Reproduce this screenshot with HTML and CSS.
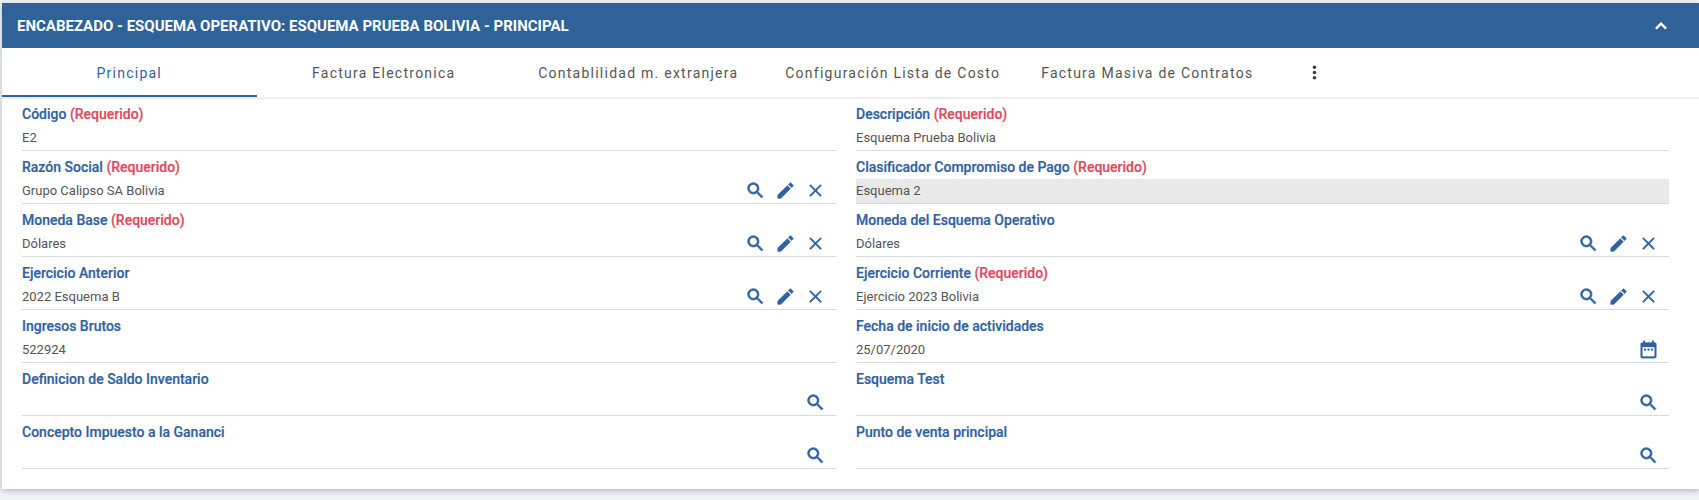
FILE: index.html
```html
<!DOCTYPE html>
<html lang="es">
<head>
<meta charset="utf-8">
<title>Esquema Operativo</title>
<link rel="stylesheet" href="styles.css">
</head>
<body>
<svg class="defs" width="0" height="0" aria-hidden="true">
  <symbol id="i-search" viewBox="0 0 24 24"><path d="M15.5 14h-.79l-.28-.27A6.47 6.47 0 0 0 16 9.5 6.5 6.5 0 1 0 9.5 16c1.61 0 3.09-.59 4.23-1.57l.27.28v.79l5 4.99L20.49 19l-4.99-5zm-6 0C7.01 14 5 11.99 5 9.5S7.01 5 9.5 5 14 7.01 14 9.5 11.99 14 9.5 14z"/></symbol>
  <symbol id="i-edit" viewBox="0 0 24 24"><path d="M3 17.25V21h3.75L17.81 9.94l-3.75-3.75L3 17.25zM20.71 7.04a1 1 0 0 0 0-1.41l-2.34-2.34a1 1 0 0 0-1.41 0l-1.83 1.83 3.75 3.75 1.83-1.83z"/></symbol>
  <symbol id="i-close" viewBox="0 0 24 24"><path d="M19 6.41 17.59 5 12 10.59 6.41 5 5 6.41 10.59 12 5 17.59 6.41 19 12 13.41 17.59 19 19 17.59 13.41 12z"/></symbol>
  <symbol id="i-cal" viewBox="0 0 24 24"><path d="M7 11h2v2H7zm4 0h2v2h-2zm4 0h2v2h-2zM19 4h-1V2h-2v2H8V2H6v2H5c-1.11 0-1.99.9-1.99 2L3 20c0 1.1.89 2 2 2h14c1.1 0 2-.9 2-2V6c0-1.1-.9-2-2-2zm0 16H5V9h14v11z"/></symbol>
</svg>
<section class="card">
  <header class="head">
    <h1 class="title">ENCABEZADO - ESQUEMA OPERATIVO: ESQUEMA PRUEBA BOLIVIA - PRINCIPAL</h1>
    <svg class="chev" viewBox="0 0 24 24"><path d="M12 8l-6 6 1.41 1.41L12 10.83l4.59 4.58L18 14z"/></svg>
  </header>
  <nav class="tabs">
    <a class="tab active">Principal</a>
    <a class="tab">Factura Electronica</a>
    <a class="tab">Contablilidad m. extranjera</a>
    <a class="tab">Configuración Lista de Costo</a>
    <a class="tab">Factura Masiva de Contratos</a>
    <svg class="more" viewBox="0 0 24 24"><path d="M12 8c1.1 0 2-.9 2-2s-.9-2-2-2-2 .9-2 2 .9 2 2 2zm0 2c-1.1 0-2 .9-2 2s.9 2 2 2 2-.9 2-2-.9-2-2-2zm0 6c-1.1 0-2 .9-2 2s.9 2 2 2 2-.9 2-2-.9-2-2-2z"/></svg>
  </nav>
  <div class="form">
    <div class="field">
      <div class="label">Código <span class="req">(Requerido)</span></div>
      <div class="value"><span class="text">E2</span></div>
    </div>
    <div class="field">
      <div class="label">Descripción <span class="req">(Requerido)</span></div>
      <div class="value"><span class="text">Esquema Prueba Bolivia</span></div>
    </div>

    <div class="field">
      <div class="label">Razón Social <span class="req">(Requerido)</span></div>
      <div class="value"><span class="text">Grupo Calipso SA Bolivia</span>
        <svg class="ico search"><use href="#i-search"/></svg><svg class="ico"><use href="#i-edit"/></svg><svg class="ico"><use href="#i-close"/></svg></div>
    </div>
    <div class="field">
      <div class="label">Clasificador Compromiso de Pago <span class="req">(Requerido)</span></div>
      <div class="value disabled"><span class="text">Esquema 2</span></div>
    </div>

    <div class="field">
      <div class="label">Moneda Base <span class="req">(Requerido)</span></div>
      <div class="value"><span class="text">Dólares</span>
        <svg class="ico search"><use href="#i-search"/></svg><svg class="ico"><use href="#i-edit"/></svg><svg class="ico"><use href="#i-close"/></svg></div>
    </div>
    <div class="field">
      <div class="label">Moneda del Esquema Operativo</div>
      <div class="value"><span class="text">Dólares</span>
        <svg class="ico search"><use href="#i-search"/></svg><svg class="ico"><use href="#i-edit"/></svg><svg class="ico"><use href="#i-close"/></svg></div>
    </div>

    <div class="field">
      <div class="label">Ejercicio Anterior</div>
      <div class="value"><span class="text">2022 Esquema B</span>
        <svg class="ico search"><use href="#i-search"/></svg><svg class="ico"><use href="#i-edit"/></svg><svg class="ico"><use href="#i-close"/></svg></div>
    </div>
    <div class="field">
      <div class="label">Ejercicio Corriente <span class="req">(Requerido)</span></div>
      <div class="value"><span class="text">Ejercicio 2023 Bolivia</span>
        <svg class="ico search"><use href="#i-search"/></svg><svg class="ico"><use href="#i-edit"/></svg><svg class="ico"><use href="#i-close"/></svg></div>
    </div>

    <div class="field">
      <div class="label">Ingresos Brutos</div>
      <div class="value"><span class="text">522924</span></div>
    </div>
    <div class="field">
      <div class="label">Fecha de inicio de actividades</div>
      <div class="value"><span class="text">25/07/2020</span>
        <svg class="ico"><use href="#i-cal"/></svg></div>
    </div>

    <div class="field">
      <div class="label">Definicion de Saldo Inventario</div>
      <div class="value"><span class="text"></span>
        <svg class="ico search"><use href="#i-search"/></svg></div>
    </div>
    <div class="field">
      <div class="label">Esquema Test</div>
      <div class="value"><span class="text"></span>
        <svg class="ico search"><use href="#i-search"/></svg></div>
    </div>

    <div class="field">
      <div class="label">Concepto Impuesto a la Gananci</div>
      <div class="value"><span class="text"></span>
        <svg class="ico search"><use href="#i-search"/></svg></div>
    </div>
    <div class="field">
      <div class="label">Punto de venta principal</div>
      <div class="value"><span class="text"></span>
        <svg class="ico search"><use href="#i-search"/></svg></div>
    </div>
  </div>
</section>
</body>
</html>
```
FILE: styles.css
```css
* { box-sizing: border-box; }
html, body { margin: 0; height: 500px; overflow: hidden; }
body {
  background: #f2f3f7;
  font-family: Roboto, "Liberation Sans", sans-serif;
  padding: 3px 0 0 2px;
}
.defs { position: absolute; }
.card {
  width: 1697px;
  height: 486px;
  background: #fff;
  box-shadow: 0 2px 6px rgba(60, 70, 100, .35);
}
.head {
  height: 45px;
  background: #2f6298;
  display: flex;
  align-items: center;
  justify-content: space-between;
  padding: 0 27px 0 15px;
}
.title {
  margin: 0;
  color: #fff;
  font-size: 15px;
  font-weight: 700;
}
.chev { width: 22px; height: 22px; fill: #fff; stroke: #fff; stroke-width: .7; }
.tabs {
  height: 49px;
  display: flex;
  align-items: center;
  box-shadow: 0 2px 0 #eceef0;
}
.tab {
  width: 254.5px;
  height: 49px;
  display: flex;
  align-items: center;
  justify-content: center;
  font-size: 14px;
  letter-spacing: 1.25px;
  color: #555;
}
.tab.active {
  color: #2f62a0;
  border-bottom: 2px solid #2f62a0;
  padding-top: 2px;
}
.more { width: 21px; height: 21px; fill: #3a3a3a; margin-left: 29px; }
.form {
  margin-top: 1px;
  display: grid;
  grid-template-columns: 814px 813px;
  column-gap: 20px;
  padding-left: 20px;
  grid-auto-rows: 53px;
}
.field {
  border-bottom: 1px solid #d9d9d9;
  display: flex;
  flex-direction: column;
  justify-content: flex-end;
}
.label {
  height: 21px;
  line-height: 19px;
  font-size: 14px;
  font-weight: 500;
  color: #2f62a0;
  -webkit-text-stroke: .2px currentColor;
}
.req { color: #de4a60; }
.value {
  height: 24px;
  display: flex;
  align-items: center;
  gap: 9px;
  padding-right: 10px;
  font-size: 13px;
  color: #555;
  padding-bottom: 1px;
}
.value.disabled { background: #e9e9e9; }
.text { flex: 1; }
.ico { width: 21px; height: 21px; fill: #2f62a0; stroke: #2f62a0; stroke-width: .3; }
.ico.search { stroke-width: .8; }
```
